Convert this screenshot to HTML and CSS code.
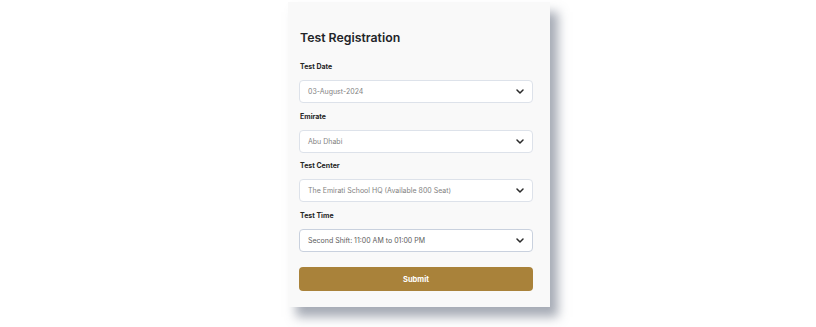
FILE: index.html
```html
<!DOCTYPE html>
<html lang="en">
<head>
<meta charset="utf-8">
<title>Test Registration</title>
<link rel="stylesheet" href="styles.css">
</head>
<body>
<div class="page">
  <form class="card">
    <h1 class="title">Test Registration</h1>
    <div class="field">
      <div class="label">Test Date</div>
      <div class="select"><span class="value">03-August-2024</span><svg class="chev" viewBox="0 0 8 5" width="8" height="5"><path d="M1 1l3 3 3-3" fill="none" stroke="#2b2b2b" stroke-width="1.5" stroke-linecap="round" stroke-linejoin="round"/></svg></div>
    </div>
    <div class="field">
      <div class="label">Emirate</div>
      <div class="select"><span class="value">Abu Dhabi</span><svg class="chev" viewBox="0 0 8 5" width="8" height="5"><path d="M1 1l3 3 3-3" fill="none" stroke="#2b2b2b" stroke-width="1.5" stroke-linecap="round" stroke-linejoin="round"/></svg></div>
    </div>
    <div class="field">
      <div class="label">Test Center</div>
      <div class="select"><span class="value">The Emirati School HQ (Available 800 Seat)</span><svg class="chev" viewBox="0 0 8 5" width="8" height="5"><path d="M1 1l3 3 3-3" fill="none" stroke="#2b2b2b" stroke-width="1.5" stroke-linecap="round" stroke-linejoin="round"/></svg></div>
    </div>
    <div class="field">
      <div class="label">Test Time</div>
      <div class="select active"><span class="value">Second Shift: 11:00 AM to 01:00 PM</span><svg class="chev" viewBox="0 0 8 5" width="8" height="5"><path d="M1 1l3 3 3-3" fill="none" stroke="#2b2b2b" stroke-width="1.5" stroke-linecap="round" stroke-linejoin="round"/></svg></div>
    </div>
    <button type="button" class="submit">Submit</button>
  </form>
</div>
</body>
</html>
```

FILE: styles.css
```css
html, body {
  margin: 0;
  padding: 0;
  background: #ffffff;
}
body {
  width: 816px;
  height: 327px;
  overflow: hidden;
  font-family: Inter, "Noto Sans", sans-serif;
}
.page {
  padding-top: 2px;
  padding-left: 288px;
}
.card {
  box-sizing: border-box;
  width: 262px;
  height: 305px;
  background: #f9f9f9;
  padding: 27px 17px 0 11px;
  box-shadow: 8px 10px 10px rgba(80, 90, 110, 0.5);
  margin: 0;
}
.title {
  margin: 0 0 15px 1px;
  font-size: 12.3px;
  line-height: 18px;
  font-weight: 600;
  color: #222428;
}
.field {
  margin-bottom: 8.5px;
}
.label {
  font-size: 7px;
  line-height: 10px;
  font-weight: 700;
  color: #262626;
  margin: 0 0 8px 1px;
}
.select {
  box-sizing: border-box;
  height: 23px;
  background: #ffffff;
  border: 1px solid #dde2ea;
  border-radius: 4px;
  display: flex;
  align-items: center;
  justify-content: space-between;
  padding: 0 8px 0 8px;
}
.select.active {
  border-color: #c9d1de;
}
.value {
  font-size: 7px;
  color: #828282;
}
.select.active .value {
  color: #5c5c5c;
}
.chev {
  display: block;
}
.submit {
  display: block;
  box-sizing: border-box;
  width: 100%;
  height: 24px;
  margin-top: 15.5px;
  border: none;
  border-radius: 4px;
  background: #a9823a;
  color: #ffffff;
  font-family: Inter, "Noto Sans", sans-serif;
  font-size: 7.5px;
  font-weight: 700;
}
```
